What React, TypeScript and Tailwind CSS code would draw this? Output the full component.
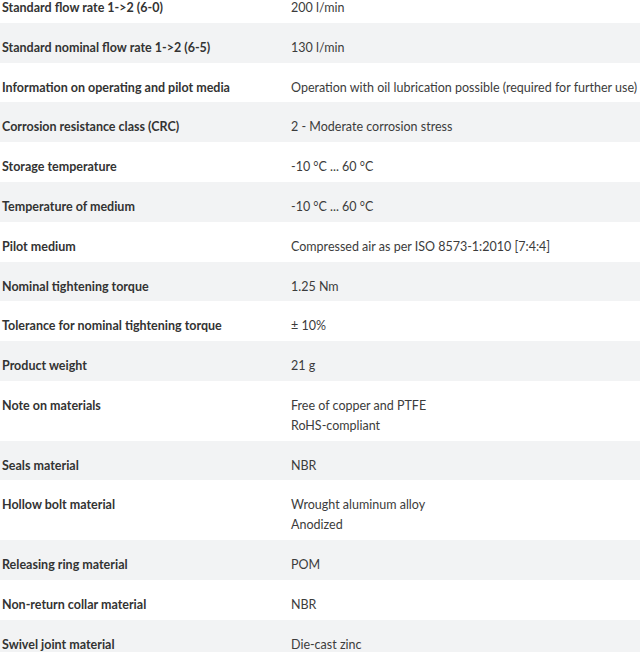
const rows: [string, string[]][] = [
  ['Standard flow rate 1->2 (6-0)', ['200 l/min']],
  ['Standard nominal flow rate 1->2 (6-5)', ['130 l/min']],
  ['Information on operating and pilot media', ['Operation with oil lubrication possible (required for further use)']],
  ['Corrosion resistance class (CRC)', ['2 - Moderate corrosion stress']],
  ['Storage temperature', ['-10 °C ... 60 °C']],
  ['Temperature of medium', ['-10 °C ... 60 °C']],
  ['Pilot medium', ['Compressed air as per ISO 8573-1:2010 [7:4:4]']],
  ['Nominal tightening torque', ['1.25 Nm']],
  ['Tolerance for nominal tightening torque', ['± 10%']],
  ['Product weight', ['21 g']],
  ['Note on materials', ['Free of copper and PTFE', 'RoHS-compliant']],
  ['Seals material', ['NBR']],
  ['Hollow bolt material', ['Wrought aluminum alloy', 'Anodized']],
  ['Releasing ring material', ['POM']],
  ['Non-return collar material', ['NBR']],
  ['Swivel joint material', ['Die-cast zinc']],
]

export default function App() {
  return (
    <div className="h-[652px] w-[640px] overflow-hidden bg-white font-['Lato',sans-serif] text-[12.5px] leading-[19.8px] text-[#333]">
      <div className="-mt-[17px]">
        {rows.map(([label, values], i) => (
          <div key={label} className={`flex pb-[5px] pt-[15px] ${i % 2 === 1 ? 'bg-[#f2f3f4]' : 'bg-white'}`}>
            <div className="w-[291px] shrink-0 whitespace-nowrap pl-[2px] font-bold">{label}</div>
            <div className="whitespace-nowrap text-[#3c3c3c]">
              {values.map((v) => (
                <div key={v}>{v}</div>
              ))}
            </div>
          </div>
        ))}
      </div>
    </div>
  )
}
